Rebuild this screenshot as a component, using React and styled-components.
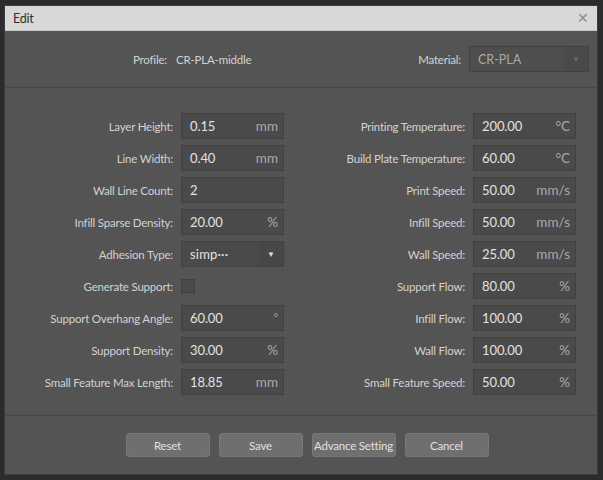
import React from "react";
import styled, { createGlobalStyle } from "styled-components";

const Global = createGlobalStyle`
  html, body { margin: 0; padding: 0; background: #2c2c2c; }
  body { width: 603px; height: 480px; overflow: hidden; font-family: Lato, "Noto Sans", sans-serif; }
  #root { width: 603px; height: 480px; }
`;

const Stage = styled.div`
  width: 603px;
  height: 480px;
  padding: 5px 5px 5px 4px;
  box-sizing: border-box;
  background: #2c2c2c;
`;

const Dialog = styled.div`
  width: 594px;
  height: 470px;
  box-sizing: border-box;
  border: 1px solid #3c3c3c;
  background: #545454;
  display: flex;
  flex-direction: column;
`;

const TitleBar = styled.div`
  height: 24px;
  background: #d8d8d8;
  display: flex;
  align-items: center;
  justify-content: space-between;
  padding: 0 8px 0 8px;
  color: #2e2e2e;
  font-size: 12.5px;
  letter-spacing: -0.2px;
  border-bottom: 1px solid #c4c4c4;
`;

const Close = styled.span`
  color: #8a8a8a;
  font-size: 14px;
  line-height: 1;
`;

const Header = styled.div`
  height: 56px;
  display: flex;
  align-items: center;
  justify-content: space-between;
  padding: 0 8px 0 128px;
  border-bottom: 1px solid #464646;
  color: #d2d2d2;
  font-size: 11.5px;
  letter-spacing: -0.2px;
`;

const Group = styled.div`
  display: flex;
  align-items: center;
  gap: ${(p) => p.$gap || 8}px;
`;

const Combo = styled.div`
  width: ${(p) => p.$w}px;
  height: 26px;
  box-sizing: border-box;
  border: 1px solid #414141;
  background: ${(p) => (p.$disabled ? "#4e4e4e" : "#4a4a4a")};
  display: flex;
  align-items: stretch;
  color: ${(p) => (p.$disabled ? "#a8a8a8" : "#e2e2e2")};
  font-size: ${(p) => (p.$disabled ? 12.5 : 13)}px;
  letter-spacing: ${(p) => (p.$disabled ? 0 : 0.2)}px;
`;

const ComboText = styled.div`
  flex: 1;
  display: flex;
  align-items: center;
  padding-left: 8px;
`;

const ComboArrow = styled.div`
  width: 24px;
  background: ${(p) => (p.$disabled ? "#4a4a4a" : "#474747")};
  display: flex;
  align-items: center;
  justify-content: center;
  color: ${(p) => (p.$disabled ? "#6c6c6c" : "#dcdcdc")};
  font-size: 8px;
`;

const Form = styled.div`
  flex: 1;
  display: grid;
  grid-template-columns: 168px 103px 173px 103px;
  grid-auto-rows: 26px;
  column-gap: 8px;
  row-gap: 6px;
  padding-top: 25px;
  align-content: start;
  border-bottom: 1px solid #464646;
`;

const Label = styled.div`
  display: flex;
  align-items: center;
  justify-content: flex-end;
  color: #d2d2d2;
  font-size: 11.5px;
  letter-spacing: -0.2px;
  white-space: nowrap;
`;

const Field = styled.div`
  box-sizing: border-box;
  border: 1px solid #404040;
  background: #4a4a4a;
  display: flex;
  align-items: center;
  justify-content: space-between;
  padding: 0 5px 0 8px;
`;

const Value = styled.span`
  color: #e2e2e2;
  font-size: 13px;
  letter-spacing: -0.1px;
`;

const Unit = styled.span`
  color: #a9a9a9;
  font-size: ${(p) => (p.$small ? 11 : 13.5)}px;
  align-self: ${(p) => (p.$small ? "flex-start" : "center")};
  margin-top: ${(p) => (p.$small ? 5 : 0)}px;
`;

const Check = styled.div`
  width: 14px;
  height: 14px;
  box-sizing: border-box;
  border: 1px solid #3f3f3f;
  background: #4b4b4b;
  align-self: center;
`;

const Footer = styled.div`
  height: 58px;
  display: flex;
  align-items: center;
  justify-content: center;
  gap: 9px;
  padding-left: 12px;
`;

const Button = styled.button`
  width: 84px;
  height: 24px;
  border: 1px solid #787878;
  border-radius: 3px;
  background: #6f6f6f;
  color: #e0e0e0;
  font-family: inherit;
  font-size: 11.5px;
  letter-spacing: -0.2px;
  white-space: nowrap;
  padding: 0;
`;

const left = [
  { label: "Layer Height:", value: "0.15", unit: "mm" },
  { label: "Line Width:", value: "0.40", unit: "mm" },
  { label: "Wall Line Count:", value: "2", unit: "" },
  { label: "Infill Sparse Density:", value: "20.00", unit: "%" },
  { label: "Adhesion Type:", type: "combo", value: "simp···" },
  { label: "Generate Support:", type: "check" },
  { label: "Support Overhang Angle:", value: "60.00", unit: "°", small: true },
  { label: "Support Density:", value: "30.00", unit: "%" },
  { label: "Small Feature Max Length:", value: "18.85", unit: "mm" },
];

const right = [
  { label: "Printing Temperature:", value: "200.00", unit: "°C" },
  { label: "Build Plate Temperature:", value: "60.00", unit: "°C" },
  { label: "Print Speed:", value: "50.00", unit: "mm/s" },
  { label: "Infill Speed:", value: "50.00", unit: "mm/s" },
  { label: "Wall Speed:", value: "25.00", unit: "mm/s" },
  { label: "Support Flow:", value: "80.00", unit: "%" },
  { label: "Infill Flow:", value: "100.00", unit: "%" },
  { label: "Wall Flow:", value: "100.00", unit: "%" },
  { label: "Small Feature Speed:", value: "50.00", unit: "%" },
];

function Control({ item }) {
  if (item.type === "combo") {
    return (
      <Combo $w={103}>
        <ComboText>{item.value}</ComboText>
        <ComboArrow>▼</ComboArrow>
      </Combo>
    );
  }
  if (item.type === "check") {
    return <Check />;
  }
  return (
    <Field>
      <Value>{item.value}</Value>
      <Unit $small={item.small}>{item.unit}</Unit>
    </Field>
  );
}

export default function App() {
  return (
    <Stage>
      <Global />
      <Dialog>
        <TitleBar>
          <span>Edit</span>
          <Close>✕</Close>
        </TitleBar>
        <Header>
          <Group $gap={9}>
            <span>Profile:</span>
            <span>CR-PLA-middle</span>
          </Group>
          <Group $gap={8}>
            <span>Material:</span>
            <Combo $w={120} $disabled>
              <ComboText>CR-PLA</ComboText>
              <ComboArrow $disabled>▼</ComboArrow>
            </Combo>
          </Group>
        </Header>
        <Form>
          {left.map((l, i) => (
            <React.Fragment key={l.label}>
              <Label>{l.label}</Label>
              <Control item={l} />
              <Label>{right[i].label}</Label>
              <Control item={right[i]} />
            </React.Fragment>
          ))}
        </Form>
        <Footer>
          <Button>Reset</Button>
          <Button>Save</Button>
          <Button>Advance Setting</Button>
          <Button>Cancel</Button>
        </Footer>
      </Dialog>
    </Stage>
  );
}
